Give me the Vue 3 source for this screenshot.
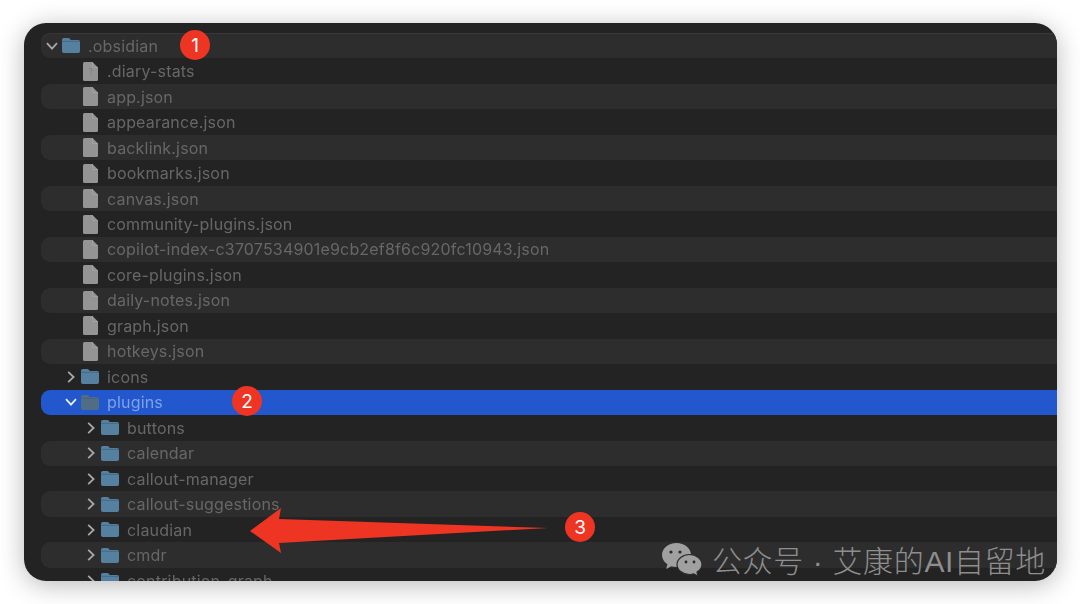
<template>
  <div class="page">
    <div class="window">
      <div class="tree">
        <div
          v-for="(row, i) in rows"
          :key="row.name"
          class="row"
          :class="[`depth-${row.depth}`, { stripe: i % 2 === 0, selected: row.selected }]"
        >
          <span class="chevron-slot">
            <svg v-if="row.type === 'open'" class="chevron" viewBox="0 0 12 12">
              <path d="M1 3.200 L6 8.600 L11 3.200" />
            </svg>
            <svg v-else-if="row.type === 'closed'" class="chevron" viewBox="0 0 12 12">
              <path d="M3.200 .8 L8.600 6 L3.200 11.200" />
            </svg>
          </span>
          <svg v-if="row.type === 'file'" class="file-icon" viewBox="0 0 15 19">
            <path d="M1.500 0 H9.500 L15 5.500 V17.500 Q15 19 13.500 19 H1.500 Q0 19 0 17.500 V1.500 Q0 0 1.500 0 Z" fill="#949494" />
            <path d="M9.500 0 V5.500 H15" fill="none" stroke="#a4a4a4" stroke-width=".8" />
            <path
              v-if="row.marked"
              d="M6 7 Q7.500 5.800 8.800 7 Q9.400 8.400 7.600 9.400 V10.800 M7.600 12.200 V13"
              fill="none"
              stroke="#7c7c7c"
              stroke-width=".9"
            />
          </svg>
          <svg v-else class="folder-icon" viewBox="0 0 18 15">
            <path
              d="M1.800 0 H6.400 Q7.200 0 7.800 .7 L8.800 1.900 H16.200 Q18 1.900 18 3.700 V13.200 Q18 15 16.200 15 H1.800 Q0 15 0 13.200 V1.800 Q0 0 1.800 0 Z"
              :fill="row.selected ? '#4f6d85' : '#55809f'"
            />
            <path d="M0 3.400 H18" :stroke="row.selected ? '#456178' : '#3f6787'" stroke-width=".8" fill="none" />
          </svg>
          <span class="name">{{ row.name }}</span>
        </div>
      </div>

      <div class="watermark">
        <svg class="wechat" viewBox="0 0 40 33">
          <path
            d="M14.500 0 C6.500 0 0 5.400 0 12 C0 15.800 2.100 19 5.400 21.300 L4.200 26 L9.400 23.200 C11 23.700 12.800 24 14.500 24 C22.500 24 29 18.600 29 12 C29 5.400 22.500 0 14.500 0 Z"
            fill="#a0a0a0"
          />
          <path
            d="M40 21.500 C40 16 34.400 11.500 27.500 11.500 C20.600 11.500 15 16 15 21.500 C15 27 20.600 31.500 27.500 31.500 C29 31.500 30.400 31.300 31.700 30.800 L36 33 L35 29 C38 27.200 40 24.500 40 21.500 Z"
            fill="#a0a0a0"
            stroke="#2a2a2a"
            stroke-width="1.200"
          />
          <circle cx="9" cy="9" r="1.600" fill="#2b2b2b" />
          <circle cx="18" cy="9" r="1.600" fill="#2b2b2b" />
          <circle cx="24" cy="19" r="1.400" fill="#2b2b2b" />
          <circle cx="32" cy="19" r="1.400" fill="#2b2b2b" />
        </svg>
        <span class="mark-text">公众号 · 艾康的AI自留地</span>
      </div>
    </div>

    <svg class="arrow" viewBox="0 0 1080 604">
      <polygon points="250,531 281,508 279,519 548,528 279,543 281,553" fill="#ee3524" />
    </svg>
    <span class="badge badge-1">1</span>
    <span class="badge badge-2">2</span>
    <span class="badge badge-3">3</span>
  </div>
</template>

<script setup>
const rows = [
  { name: '.obsidian', depth: 0, type: 'open' },
  { name: '.diary-stats', depth: 1, type: 'file', marked: true },
  { name: 'app.json', depth: 1, type: 'file' },
  { name: 'appearance.json', depth: 1, type: 'file' },
  { name: 'backlink.json', depth: 1, type: 'file' },
  { name: 'bookmarks.json', depth: 1, type: 'file' },
  { name: 'canvas.json', depth: 1, type: 'file' },
  { name: 'community-plugins.json', depth: 1, type: 'file' },
  { name: 'copilot-index-c3707534901e9cb2ef8f6c920fc10943.json', depth: 1, type: 'file' },
  { name: 'core-plugins.json', depth: 1, type: 'file' },
  { name: 'daily-notes.json', depth: 1, type: 'file' },
  { name: 'graph.json', depth: 1, type: 'file' },
  { name: 'hotkeys.json', depth: 1, type: 'file' },
  { name: 'icons', depth: 1, type: 'closed' },
  { name: 'plugins', depth: 1, type: 'open', selected: true },
  { name: 'buttons', depth: 2, type: 'closed' },
  { name: 'calendar', depth: 2, type: 'closed' },
  { name: 'callout-manager', depth: 2, type: 'closed' },
  { name: 'callout-suggestions', depth: 2, type: 'closed' },
  { name: 'claudian', depth: 2, type: 'closed' },
  { name: 'cmdr', depth: 2, type: 'closed' },
  { name: 'contribution-graph', depth: 2, type: 'closed' }
]
</script>

<style>
html,
body {
  margin: 0;
  background: #fff;
}
</style>

<style scoped>
.page {
  position: relative;
  width: 1080px;
  height: 604px;
  padding: 23px 23px 23px 24px;
  box-sizing: border-box;
  overflow: hidden;
  background: #fff;
  font-family: Inter, "Liberation Sans", sans-serif;
}

.window {
  position: relative;
  height: 558px;
  border-radius: 22px;
  background: #232323;
  box-shadow: 0 4px 26px rgba(0, 0, 0, 0.28);
  overflow: hidden;
}

/* TREE */
.tree {
  display: flex;
  flex-direction: column;
  padding: 10px 0 0 17px;
  filter: blur(0.35px);
}

.row {
  flex: none;
  display: flex;
  align-items: center;
  height: 25.47px;
  border-radius: 9px 0 0 9px;
  font-size: 16px;
  letter-spacing: 0.18px;
  color: #676767;
}

.row:first-child {
  box-shadow: inset 0 1px #383838;
}

.row.stripe {
  background: #2d2d2d;
}

.row.selected {
  background: #2257cd;
  color: #7fa3e6;
}

.row.depth-0 {
  padding-left: 4.5px;
}

.row.depth-1 {
  padding-left: 23.5px;
}

.row.depth-2 {
  padding-left: 43.5px;
}

.chevron-slot {
  width: 16.5px;
  height: 12px;
  flex: none;
}

.chevron {
  display: block;
  width: 12px;
  height: 12px;
  fill: none;
  stroke: #a8a8a8;
  stroke-width: 1.8;
}

.selected .chevron {
  stroke: #e8eefb;
}

.folder-icon {
  width: 18px;
  height: 15px;
  flex: none;
  margin-right: 8px;
}

.file-icon {
  width: 15px;
  height: 19px;
  flex: none;
  margin: 0 9px 0 2px;
}

.name {
  white-space: nowrap;
}

/* WATERMARK */
.watermark {
  position: absolute;
  right: 11px;
  bottom: 0;
  display: flex;
  align-items: center;
  gap: 10px;
}

.wechat {
  width: 40px;
  height: 33px;
}

.mark-text {
  font-family: "Liberation Sans", "Noto Sans CJK SC", sans-serif;
  font-size: 30px;
  font-weight: 300;
  letter-spacing: 0.65px;
  color: #8e8e8e;
  white-space: nowrap;
}

/* ANNOTATIONS */
.arrow {
  position: absolute;
  left: 0;
  top: 0;
  width: 1080px;
  height: 604px;
  pointer-events: none;
}

.badge {
  position: absolute;
  width: 30px;
  height: 30px;
  border-radius: 50%;
  display: flex;
  align-items: center;
  justify-content: center;
  background: #ee3524;
  color: #fff;
  font-size: 19px;
}

.badge-1 {
  left: 180px;
  top: 30px;
}

.badge-2 {
  left: 232px;
  top: 386px;
}

.badge-3 {
  left: 565px;
  top: 512px;
}
</style>
